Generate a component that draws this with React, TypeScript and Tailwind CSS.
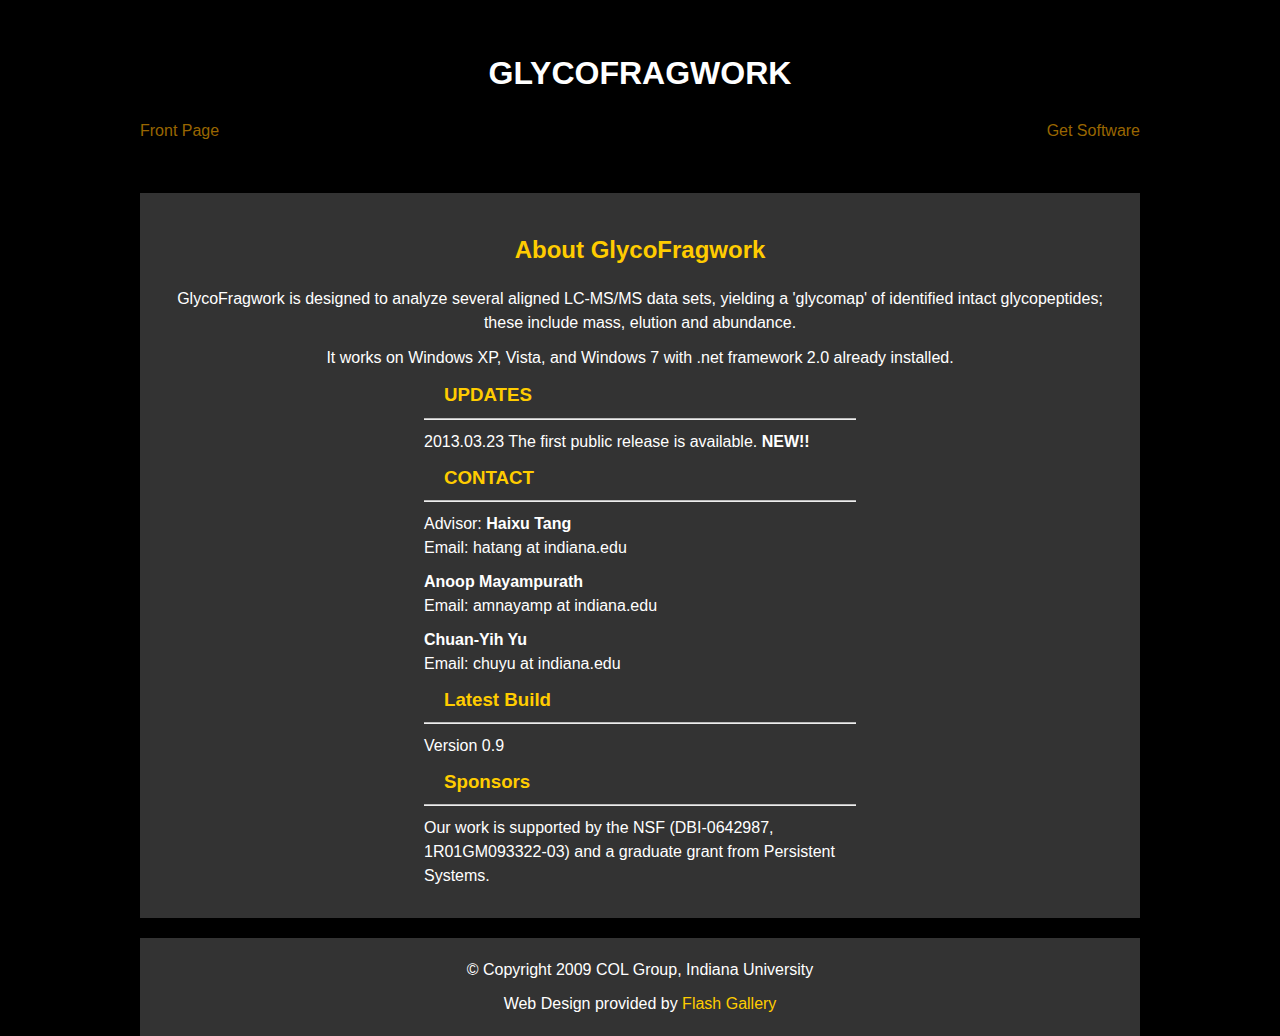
export default function App() {
  const font = { fontFamily: '"Liberation Sans", Arial, sans-serif' };
  const Heading = ({ children, mt = "mt-[12px]" }: { children: React.ReactNode; mt?: string }) => (
    <div className={`${mt} pl-5 text-[18.72px] leading-[24px] font-bold text-[#ffcc00]`}>{children}</div>
  );
  const Rule = ({ mt = "mt-[10px]" }: { mt?: string }) => (
    <div className={`${mt} h-[2px] border-t border-[#bbbbbb] bg-[#eeeeee]`} />
  );
  return (
    <div className="min-h-[1036px] bg-black text-white text-[16px] leading-[24px]" style={font}>
      <div className="mx-auto w-[1000px]">
        <div className="pt-[55px] text-center text-[32px] leading-[36px] font-bold">GLYCOFRAGWORK</div>
        <div className="mt-[28px] flex justify-between text-[#996600]">
          <a>Front Page</a>
          <a>Get Software</a>
        </div>
        <div className="mt-[50px] bg-[#333333] px-[30px] pt-[42px] pb-[30px]">
          <h2 className="text-center text-[24px] leading-[30px] font-bold text-[#ffcc00]">About GlycoFragwork</h2>
          <p className="mt-[22px] text-center">
            GlycoFragwork is designed to analyze several aligned LC-MS/MS data sets, yielding a 'glycomap' of identified intact glycopeptides; these include mass, elution and abundance.
          </p>
          <p className="mt-[11px] text-center">
            It works on Windows XP, Vista, and Windows 7 with .net framework 2.0 already installed.
          </p>
          <div className="mx-auto w-[432px]">
            <Heading mt="mt-[13px]">UPDATES</Heading>
            <Rule mt="mt-[11px]" />
            <p className="mt-[10px]">
              2013.03.23 The first public release is available. <b>NEW!!</b>
            </p>
            <Heading>CONTACT</Heading>
            <Rule />
            <p className="mt-[10px]">
              Advisor: <b>Haixu Tang</b>
              <br />
              Email: hatang at indiana.edu
            </p>
            <p className="mt-[10px]">
              <b>Anoop Mayampurath</b>
              <br />
              Email: amnayamp at indiana.edu
            </p>
            <p className="mt-[10px]">
              <b>Chuan-Yih Yu</b>
              <br />
              Email: chuyu at indiana.edu
            </p>
            <Heading>Latest Build</Heading>
            <Rule />
            <p className="mt-[10px]">Version 0.9</p>
            <Heading>Sponsors</Heading>
            <Rule />
            <p className="mt-[10px]">
              Our work is supported by the NSF (DBI-0642987, 1R01GM093322-03) and a graduate grant from Persistent Systems.
            </p>
          </div>
        </div>
        <div className="mt-[20px] bg-[#333333] pt-[20px] pb-[22px] text-center">
          <p>© Copyright 2009 COL Group, Indiana University</p>
          <p className="mt-[10px]">
            Web Design provided by <a className="text-[#ffcc00]">Flash Gallery</a>
          </p>
        </div>
      </div>
    </div>
  );
}
